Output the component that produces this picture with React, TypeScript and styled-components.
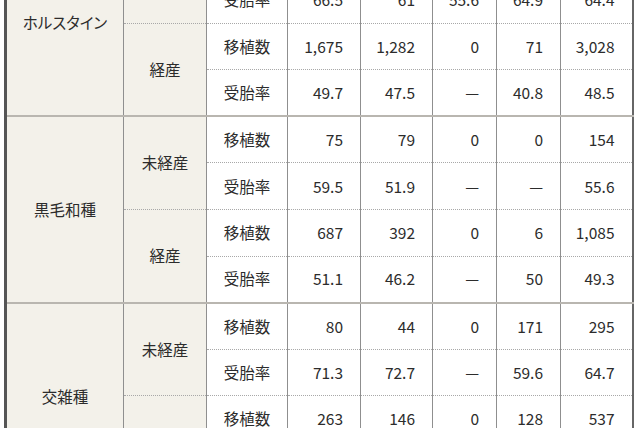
import React from 'react';
import styled, { createGlobalStyle } from 'styled-components';

// ---------------- data ----------------

type Metric = { label: string; values: string[] };
type Parity = { label: string; rows: Metric[] };
type Breed = { label: string; groups: Parity[] };

const DASH = '—';

const COLUMN_WIDTHS = [118, 83, 81, 73, 72, 64, 64, 72];

const breeds: Breed[] = [
    {
        label: 'ホルスタイン',
        groups: [
            {
                label: '未経産',
                rows: [
                    { label: '移植数', values: ['412', '368', '9', '57', '846'] },
                    { label: '受胎率', values: ['66.5', '61', '55.6', '64.9', '64.4'] },
                ],
            },
            {
                label: '経産',
                rows: [
                    { label: '移植数', values: ['1,675', '1,282', '0', '71', '3,028'] },
                    { label: '受胎率', values: ['49.7', '47.5', DASH, '40.8', '48.5'] },
                ],
            },
        ],
    },
    {
        label: '黒毛和種',
        groups: [
            {
                label: '未経産',
                rows: [
                    { label: '移植数', values: ['75', '79', '0', '0', '154'] },
                    { label: '受胎率', values: ['59.5', '51.9', DASH, DASH, '55.6'] },
                ],
            },
            {
                label: '経産',
                rows: [
                    { label: '移植数', values: ['687', '392', '0', '6', '1,085'] },
                    { label: '受胎率', values: ['51.1', '46.2', DASH, '50', '49.3'] },
                ],
            },
        ],
    },
    {
        label: '交雑種',
        groups: [
            {
                label: '未経産',
                rows: [
                    { label: '移植数', values: ['80', '44', '0', '171', '295'] },
                    { label: '受胎率', values: ['71.3', '72.7', DASH, '59.6', '64.7'] },
                ],
            },
            {
                label: '経産',
                rows: [
                    { label: '移植数', values: ['263', '146', '0', '128', '537'] },
                    { label: '受胎率', values: ['50.4', '47.9', DASH, '52.3', '50.1'] },
                ],
            },
        ],
    },
];

// ---------------- styles ----------------

const GlobalStyle = createGlobalStyle`
    html, body {
        margin: 0;
        padding: 0;
        background: #ffffff;
        overflow: hidden;
    }
    body {
        font-family: "Noto Sans CJK JP", "Noto Sans", sans-serif;
        color: #2c2c2c;
    }
`;

const Page = styled.div`
    padding-left: 4px;
    height: 428px;
    overflow: hidden;
`;

// the table continues above the visible area: the first two rows are scrolled off
const Table = styled.table`
    margin-top: -70.5px;
    width: 629px;
    border-collapse: collapse;
    table-layout: fixed;
    border-left: 3px solid #555555;
    border-right: 2px solid #666666;
    font-size: 15.5px;
    line-height: 1;
`;

const Col = styled.col<{ $w: number }>`
    width: ${(p) => p.$w}px;
`;

const Row = styled.tr`
    height: 46.6px;
    td {
        border-top: 1px dotted #a8a8a8;
    }
`;

const HeadCell = styled.td<{ $top?: 'solid' | 'dotted' }>`
    background: #f3f1ea;
    text-align: center;
    vertical-align: middle;
    border-right: 1px solid #8f8f8f;
    padding: 0;
    font-feature-settings: "palt";
    ${(p) => p.$top === 'solid' && 'border-top: 2px solid #b9b6b0 !important;'}
`;

const MetricCell = styled.td<{ $groupStart?: boolean }>`
    background: #ffffff;
    text-align: center;
    vertical-align: middle;
    border-right: 1px solid #8f8f8f;
    padding: 0;
    ${(p) => p.$groupStart && 'border-top: 2px solid #b9b6b0 !important;'}
`;

const NumCell = styled.td<{ $groupStart?: boolean }>`
    background: #ffffff;
    text-align: right;
    vertical-align: middle;
    border-right: 1px solid #8f8f8f;
    padding: 0 17px 0 0;
    white-space: nowrap;
    ${(p) => p.$groupStart && 'border-top: 2px solid #b9b6b0 !important;'}
    &:last-child {
        border-right: none;
    }
`;

// ---------------- component ----------------

export default function App() {
    return (
        <Page>
            <GlobalStyle />
            <Table>
                <colgroup>
                    {COLUMN_WIDTHS.map((w, i) => (
                        <Col key={i} $w={w} />
                    ))}
                </colgroup>
                <tbody>
                    {breeds.map((breed, bi) => {
                        const breedRows = breed.groups.reduce((n, g) => n + g.rows.length, 0);
                        return breed.groups.map((group, gi) =>
                            group.rows.map((row, ri) => {
                                const groupStart = gi === 0 && ri === 0 && bi > 0;
                                return (
                                    <Row key={`${bi}-${gi}-${ri}`}>
                                        {gi === 0 && ri === 0 && (
                                            <HeadCell rowSpan={breedRows} $top={bi > 0 ? 'solid' : undefined}>
                                                {breed.label}
                                            </HeadCell>
                                        )}
                                        {ri === 0 && (
                                            <HeadCell
                                                rowSpan={group.rows.length}
                                                $top={groupStart ? 'solid' : 'dotted'}
                                            >
                                                {group.label}
                                            </HeadCell>
                                        )}
                                        <MetricCell $groupStart={groupStart}>{row.label}</MetricCell>
                                        {row.values.map((v, vi) => (
                                            <NumCell key={vi} $groupStart={groupStart}>
                                                {v}
                                            </NumCell>
                                        ))}
                                    </Row>
                                );
                            })
                        );
                    })}
                </tbody>
            </Table>
        </Page>
    );
}
